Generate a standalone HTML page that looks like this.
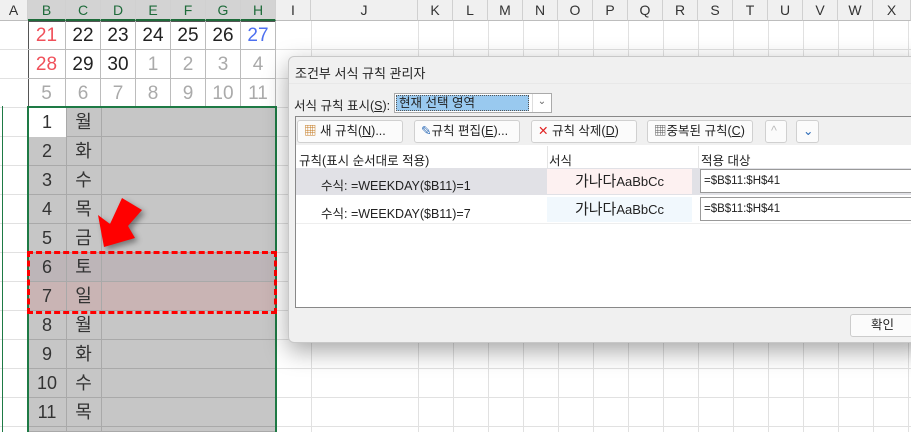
<!DOCTYPE html>
<html><head><meta charset="utf-8"><style>
*{margin:0;padding:0;box-sizing:border-box}
html,body{width:911px;height:432px;overflow:hidden}
body{position:relative;background:#fff;font-family:"Liberation Sans","Noto Sans CJK KR",sans-serif}
.a{position:absolute}
.hgrid{left:0;top:21px;width:911px;height:411px;background:repeating-linear-gradient(to bottom,transparent 0,transparent 28px,#e1e1e1 28px,#e1e1e1 29px)}
.v{position:absolute;top:0;width:1px;height:432px;background:#e1e1e1}
.hd{position:absolute;top:0;height:21px;background:#f0f0f0;border-right:1px solid #d0d0d0;border-bottom:1px solid #bdbdbd;font-size:14px;color:#333;text-align:center;line-height:20px}
.hd.s{background:#d3d3d3;color:#1e6b3a;border-bottom:2px solid #1e6b3a}
.c{position:absolute;height:29px;width:35px;text-align:center;font-size:19px;line-height:29px;color:#222;border-right:1px solid #bcbcbc;border-bottom:1px solid #bcbcbc}
.g{color:#aaa}.r{color:#f0505a}.b{color:#4d70f0}
.sel{position:absolute;left:28px;width:248px;height:29px;background:#c6c6c6;border-bottom:1px solid #a9a9a9}
.sel span{position:absolute;top:0;height:29px;line-height:29px;font-size:18px;color:#333;text-align:center}
.dlg{left:288px;top:56px;width:640px;height:287px;background:#f0f0f0;border:1px solid #c8c8c8;border-radius:6px;box-shadow:0 8px 24px rgba(0,0,0,.35);font-size:12.5px;color:#222}
.btn{position:absolute;top:63px;height:23px;background:#fbfbfb;border:1px solid #d0d0d0;border-radius:3px;font-size:12.5px;line-height:21px;padding-left:6px;white-space:nowrap}
</style></head><body>
<div class="a hgrid"></div>
<div class="v" style="left:28px"></div>
<div class="v" style="left:311px"></div><div class="v" style="left:418px"></div><div class="v" style="left:453px"></div><div class="v" style="left:488px"></div><div class="v" style="left:523px"></div><div class="v" style="left:558px"></div><div class="v" style="left:593px"></div><div class="v" style="left:628px"></div><div class="v" style="left:663px"></div><div class="v" style="left:698px"></div><div class="v" style="left:733px"></div><div class="v" style="left:768px"></div><div class="v" style="left:803px"></div><div class="v" style="left:838px"></div><div class="v" style="left:873px"></div><div class="v" style="left:908px"></div>

<div class="hd" style="left:0;width:28px">A</div>
<div class="hd s" style="left:28px;width:38px">B</div>
<div class="hd s" style="left:66px;width:35px">C</div>
<div class="hd s" style="left:101px;width:35px">D</div>
<div class="hd s" style="left:136px;width:35px">E</div>
<div class="hd s" style="left:171px;width:35px">F</div>
<div class="hd s" style="left:206px;width:35px">G</div>
<div class="hd s" style="left:241px;width:35px">H</div>
<div class="hd" style="left:276px;width:35px">I</div>
<div class="hd" style="left:311px;width:107px">J</div>
<div class="hd" style="left:418px;width:35px">K</div><div class="hd" style="left:453px;width:35px">L</div><div class="hd" style="left:488px;width:35px">M</div><div class="hd" style="left:523px;width:35px">N</div><div class="hd" style="left:558px;width:35px">O</div><div class="hd" style="left:593px;width:35px">P</div><div class="hd" style="left:628px;width:35px">Q</div><div class="hd" style="left:663px;width:35px">R</div><div class="hd" style="left:698px;width:35px">S</div><div class="hd" style="left:733px;width:35px">T</div><div class="hd" style="left:768px;width:35px">U</div><div class="hd" style="left:803px;width:35px">V</div><div class="hd" style="left:838px;width:35px">W</div><div class="hd" style="left:873px;width:38px">X</div>

<div class="a" style="left:28px;top:21px;width:248px;height:87px;background:#fff;border:1px solid #555"></div>
<div class="c r" style="left:28px;top:21px;width:38px">21</div><div class="c" style="left:66px;top:21px">22</div><div class="c" style="left:101px;top:21px">23</div><div class="c" style="left:136px;top:21px">24</div><div class="c" style="left:171px;top:21px">25</div><div class="c" style="left:206px;top:21px">26</div><div class="c b" style="left:241px;top:21px">27</div>
<div class="c r" style="left:28px;top:50px;width:38px">28</div><div class="c" style="left:66px;top:50px">29</div><div class="c" style="left:101px;top:50px">30</div><div class="c g" style="left:136px;top:50px">1</div><div class="c g" style="left:171px;top:50px">2</div><div class="c g" style="left:206px;top:50px">3</div><div class="c g" style="left:241px;top:50px">4</div>
<div class="c g" style="left:28px;top:79px;width:38px">5</div><div class="c g" style="left:66px;top:79px">6</div><div class="c g" style="left:101px;top:79px">7</div><div class="c g" style="left:136px;top:79px">8</div><div class="c g" style="left:171px;top:79px">9</div><div class="c g" style="left:206px;top:79px">10</div><div class="c g" style="left:241px;top:79px">11</div>

<div class="a" style="left:2px;top:106px;width:1px;height:326px;background:#1e7a45"></div>

<div class="sel" style="top:108px"><span style="left:0;width:38px;background:#fff">1</span><span style="left:38px;width:35px">월</span></div>
<div class="sel" style="top:137px"><span style="left:0;width:38px">2</span><span style="left:38px;width:35px">화</span></div>
<div class="sel" style="top:166px"><span style="left:0;width:38px">3</span><span style="left:38px;width:35px">수</span></div>
<div class="sel" style="top:195px"><span style="left:0;width:38px">4</span><span style="left:38px;width:35px">목</span></div>
<div class="sel" style="top:224px"><span style="left:0;width:38px">5</span><span style="left:38px;width:35px">금</span></div>
<div class="sel" style="top:253px;background:#bdb5b8"><span style="left:0;width:38px">6</span><span style="left:38px;width:35px">토</span></div>
<div class="sel" style="top:282px;background:#c9b4b4"><span style="left:0;width:38px">7</span><span style="left:38px;width:35px">일</span></div>
<div class="sel" style="top:311px"><span style="left:0;width:38px">8</span><span style="left:38px;width:35px">월</span></div>
<div class="sel" style="top:340px"><span style="left:0;width:38px">9</span><span style="left:38px;width:35px">화</span></div>
<div class="sel" style="top:369px"><span style="left:0;width:38px">10</span><span style="left:38px;width:35px">수</span></div>
<div class="sel" style="top:398px"><span style="left:0;width:38px">11</span><span style="left:38px;width:35px">목</span></div>
<div class="sel" style="top:427px;height:5px"></div>
<div class="a" style="left:66px;top:108px;width:1px;height:324px;background:#a9a9a9"></div>
<div class="a" style="left:101px;top:108px;width:1px;height:324px;background:#a9a9a9"></div>
<div class="a" style="left:27px;top:106px;width:250px;height:330px;border:2px solid #1e7a45"></div>
<div class="a" style="left:27px;top:251px;width:250px;height:63px;border:3px dashed #f00"></div>
<svg class="a" style="left:90px;top:190px" width="70" height="65"><polygon points="32,8 52,20 38,36 45,48 14,57 8,25 20,34" fill="#f00" style="filter:drop-shadow(3px 3px 3px rgba(0,0,0,.4))"/></svg>

<div class="a dlg">
 <div class="a" style="left:6px;top:6px;font-size:13px">조건부 서식 규칙 관리자</div>
 <div class="a" style="left:0;top:26px;width:640px;height:0;border-top:1px solid #e8e8e8"></div>
 <div class="a" style="left:5px;top:38px">서식 규칙 표시(<u>S</u>):</div>
 <div class="a" style="left:105px;top:36px;width:158px;height:20px;background:#fff;border:1px solid #aaa">
  <div class="a" style="left:1px;top:1px;width:133px;height:16px;background:#99c9ef;border:1px dotted #555;line-height:14px;padding-left:2px">현재 선택 영역</div>
  <div class="a" style="left:137px;top:0;width:19px;height:18px;border-left:1px solid #ddd;font-size:10px;color:#666;text-align:center;line-height:16px">⌄</div>
 </div>
 <div class="a" style="left:6px;top:59px;width:640px;height:192px;background:#fff;border:1px solid #888"></div>
 <div class="a" style="left:7px;top:60px;width:630px;height:28px;background:#f0f0f0"></div>
 <div class="btn" style="left:8px;width:106px"><span style="color:#c47a20">▦</span> 새 규칙(<u>N</u>)...</div>
 <div class="btn" style="left:125px;width:106px"><span style="color:#2f6db8">✎</span>규칙 편집(<u>E</u>)...</div>
 <div class="btn" style="left:242px;width:106px"><span style="color:#e02020">✕</span> 규칙 삭제(<u>D</u>)</div>
 <div class="btn" style="left:358px;width:106px"><span style="color:#555">▦</span>중복된 규칙(<u>C</u>)</div>
 <div class="btn" style="left:476px;width:22px;color:#bbb;padding-left:5px">^</div>
 <div class="btn" style="left:507px;width:23px;color:#2f6db8;padding-left:6px">⌄</div>
 <div class="a" style="left:10px;top:93px">규칙(표시 순서대로 적용)</div>
 <div class="a" style="left:260px;top:93px">서식</div>
 <div class="a" style="left:412px;top:93px">적용 대상</div>
 <div class="a" style="left:258px;top:89px;width:1px;height:22px;background:#e5e5e5"></div>
 <div class="a" style="left:409px;top:89px;width:1px;height:22px;background:#e5e5e5"></div>
 <div class="a" style="left:7px;top:111px;width:630px;height:27px;background:#e1e1e6"></div>
 <div class="a" style="left:32px;top:118px">수식: =WEEKDAY($B11)=1</div>
 <div class="a" style="left:258px;top:112px;width:145px;height:25px;background:#fdf1f1;text-align:center;line-height:25px;font-size:15px">가나다<span style="font-size:13px">AaBbCc</span></div>
 <div class="a" style="left:411px;top:112px;width:240px;height:24px;background:#fff;border:1px solid #999;line-height:22px;padding-left:3px;font-size:11.5px">=$B$11:$H$41</div>
 <div class="a" style="left:32px;top:146px">수식: =WEEKDAY($B11)=7</div>
 <div class="a" style="left:258px;top:140px;width:145px;height:25px;background:#f1f8fd;text-align:center;line-height:25px;font-size:15px">가나다<span style="font-size:13px">AaBbCc</span></div>
 <div class="a" style="left:411px;top:140px;width:240px;height:24px;background:#fff;border:1px solid #999;line-height:22px;padding-left:3px;font-size:11.5px">=$B$11:$H$41</div>
 <div class="a" style="left:7px;top:166px;width:630px;height:1px;background:#eee"></div>
 <div class="a" style="left:561px;top:257px;width:70px;height:23px;background:#fbfbfb;border:1px solid #ccc;border-radius:3px;line-height:21px;padding-left:20px">확인</div>
</div>
</body></html>
